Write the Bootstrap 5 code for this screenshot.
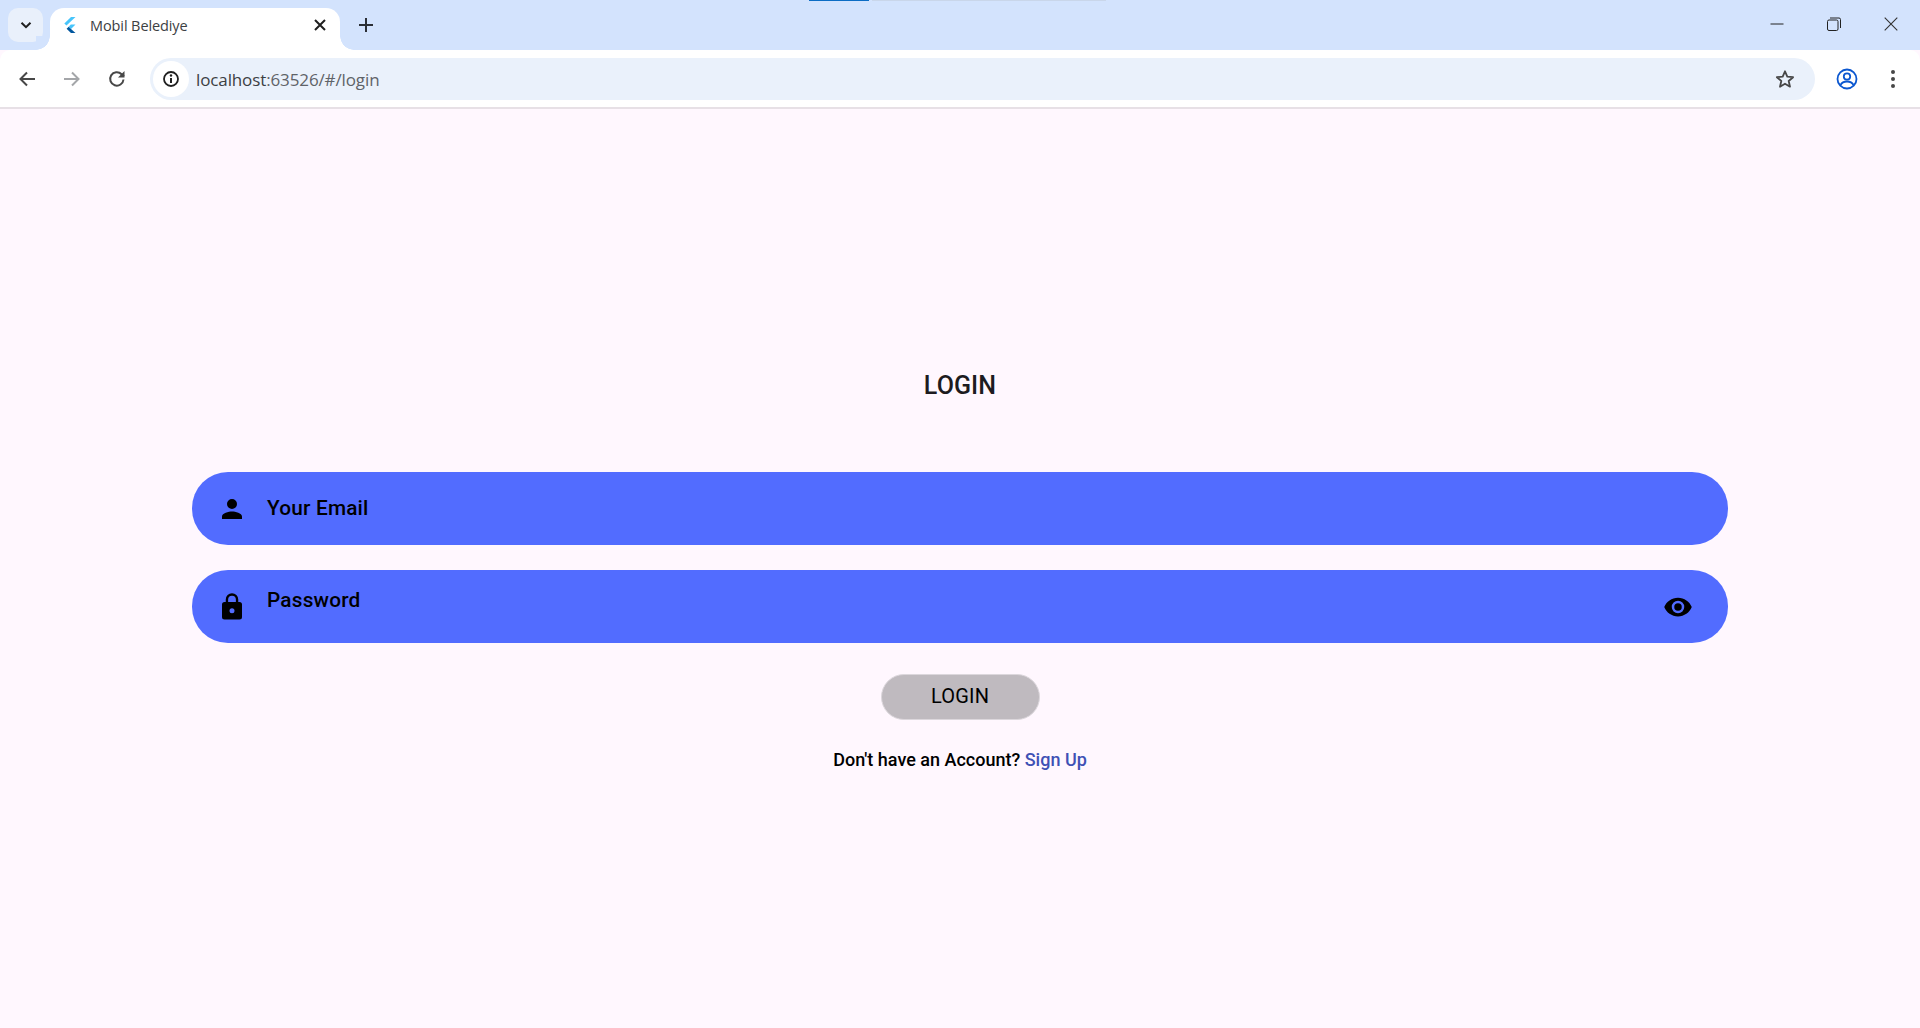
<!DOCTYPE html>
<html lang="en">
<head>
<meta charset="utf-8">
<title>Mobil Belediye</title>
<link href="https://cdn.jsdelivr.net/npm/bootstrap@5.3.0/dist/css/bootstrap.min.css" rel="stylesheet">
<style>
html,body{height:100%;margin:0}
body{background:#fff7fe;font-family:Roboto,"Liberation Sans",sans-serif;overflow:hidden;color:#000}
.chrome-strip{height:50px;background:#d3e3fd;position:relative}
.load-a{position:absolute;top:0;left:809px;width:60px;height:1px;background:#0b6cc4}
.load-b{position:absolute;top:0;left:872px;width:234px;height:1px;background:#c9d6ea}
.tab-search{width:35px;height:34px;margin:8px 0 0 8px;background:#e9f0fb;border-radius:10px}
.tab-shape{position:relative;width:290px;height:42px;margin:8px 0 0 7px;padding:0 0 8px 12px;background:#fff;border-radius:14px 14px 0 0;font:400 14.500px "Open Sans","Liberation Sans",sans-serif;color:#3c4043}
.tab-shape::before,.tab-shape::after{content:"";position:absolute;bottom:0;width:14px;height:14px;background:radial-gradient(circle at 100% 0,#d3e3fd 13.500px,#fff 14px)}
.tab-shape::before{left:-14px;transform:scaleX(-1)}
.tab-shape::after{right:-14px}
.tab-title{margin-left:12px;width:207px;letter-spacing:-.1px}
.plus-wrap{margin-left:19px}
.win-btns{margin-left:auto;width:150px;padding:0 22px 2px 0}
.tool-row{height:59px;padding-top:1px;background:#fff;border-bottom:2px solid #e7e0e6;border-radius:10px 10px 0 0}
.nav-ico{width:45px}
.url-pill{height:42px;margin-left:11px;width:1665px;flex:none;background:#eaf1fb;border-radius:21px;padding-left:3px;color:#3c4043;font:400 17px "Open Sans","Liberation Sans",sans-serif;letter-spacing:-.12px}
.url-dim{color:#5f6368}
.info-wrap{width:36px;height:36px;border-radius:50%;background:#fff;margin-right:7px}
.star-wrap{margin-left:auto;padding-right:20px}
.profile-wrap{width:64px}
.menu-wrap{padding-right:14px}
.login-view{height:919px;padding-top:261px}
.page-title{font-size:25px;font-weight:500;line-height:32px;color:#1d1b20;margin:0 0 70px;letter-spacing:.1px}
.form-wrap{width:1536px;margin:0 auto}
.pill-field{height:73px;background:#526cff;border-radius:36px;padding:0 35px 0 25px;margin-bottom:25px;font-size:20.800px;font-weight:500;color:#000}
.pill-field .lab{margin-left:20px;letter-spacing:.2px;padding-top:1px}
.lab-up{position:relative;top:-6px}
.eye{margin-left:auto}
.login-btn{display:block;width:159px;height:46px;margin:31px auto 0;padding:0 0 2px;border:1px solid #dcd7dc;border-radius:23px;background:#bfbabf;color:#000;font:400 20px Roboto,sans-serif;letter-spacing:.2px;box-shadow:none}
.login-btn:hover{background:#bfbabf;color:#000;border-color:#dcd7dc}
.signup-line{margin:28px 0 0;font-size:18px;font-weight:500;line-height:24px;color:#000}
.signup-line a{color:#3f51b5;text-decoration:none}
</style>
</head>
<body>
<div class="chrome-strip d-flex">
  <span class="load-a"></span><span class="load-b"></span>
  <div class="tab-search d-flex align-items-center justify-content-center">
    <svg width="14" height="14" viewBox="0 0 14 14"><path d="M2.500 4.700 7 9.200l4.500-4.500" fill="none" stroke="#1f1f1f" stroke-width="2"/></svg>
  </div>
  <div class="tab-shape d-flex align-items-center">
    <svg width="16" height="18" viewBox="0 0 16 18" class="flex-shrink-0"><path d="M9 1h4.500L4.500 9.500 2.300 7.500z" fill="#47c5fb"/><path d="M8.800 8.500h4.700L9 13l-2.300-2.300z" fill="#47c5fb"/><path d="M6.700 10.700 9 13l4.500 4H9L4.600 12.800z" fill="#00569e"/></svg>
    <span class="tab-title">Mobil Belediye</span>
    <svg width="14" height="14" viewBox="0 0 14 14" class="ms-3"><path d="M2 2l10 10M12 2 2 12" stroke="#1f1f1f" stroke-width="2" fill="none"/></svg>
  </div>
  <div class="plus-wrap d-flex align-items-center">
    <svg width="14" height="14" viewBox="0 0 14 14"><path d="M7 0v14M0 7h14" stroke="#2b2f36" stroke-width="2"/></svg>
  </div>
  <div class="win-btns d-flex align-items-center justify-content-between">
    <svg width="14" height="14" viewBox="0 0 14 14"><path d="M.5 7h13" stroke="#222" stroke-width="1"/></svg>
    <svg width="14" height="14" viewBox="0 0 14 14" fill="none" stroke="#222"><rect x=".5" y="3" width="10.500" height="10.500" rx="1.500"/><path d="M3 1h9a1.500 1.500 0 0 1 1.500 1.500V11"/></svg>
    <svg width="14" height="14" viewBox="0 0 14 14"><path d="M.7.700l12.600 12.600M13.300.700.7 13.300" stroke="#333" stroke-width="1.100" fill="none"/></svg>
  </div>
</div>
<div class="tool-row d-flex align-items-center ps-1">
  <div class="nav-ico d-flex justify-content-center">
    <svg width="18" height="18" viewBox="0 0 18 18"><path d="M17 9H2.500M9 2.500 2.500 9 9 15.500" fill="none" stroke="#474747" stroke-width="2"/></svg>
  </div>
  <div class="nav-ico d-flex justify-content-center">
    <svg width="18" height="18" viewBox="0 0 18 18"><path d="M1 9h14.500M9 2.500 15.500 9 9 15.500" fill="none" stroke="#a4a6a9" stroke-width="2"/></svg>
  </div>
  <div class="nav-ico d-flex justify-content-center">
    <svg width="18" height="18" viewBox="0 0 18 18"><path d="M15.500 9.500A6.700 6.700 0 1 1 13.600 4.200L16 6.200" fill="none" stroke="#474747" stroke-width="2"/><path d="M16.500 1v6.500H10z" fill="#474747"/></svg>
  </div>
  <div class="url-pill d-flex align-items-center">
    <span class="info-wrap d-flex align-items-center justify-content-center">
      <svg width="18" height="18" viewBox="0 0 18 18"><circle cx="9" cy="9" r="7" fill="none" stroke="#1f1f1f" stroke-width="1.800"/><path d="M9 8v5" stroke="#1f1f1f" stroke-width="2"/><circle cx="9" cy="5.500" r="1.200" fill="#1f1f1f"/></svg>
    </span>
    <span>localhost<span class="url-dim">:63526/#/login</span></span>
    <span class="star-wrap d-flex">
      <svg width="20" height="20" viewBox="0 0 20 20"><path d="M10 2.300 12.300 7.700l5.800.5-4.400 3.800 1.300 5.700L10 14.700l-5 3 1.300-5.700L1.900 8.200l5.800-.5z" fill="none" stroke="#474747" stroke-width="1.800" stroke-linejoin="round"/></svg>
    </span>
  </div>
  <div class="profile-wrap d-flex justify-content-center">
    <svg width="22" height="22" viewBox="0 0 22 22"><circle cx="11" cy="11" r="9.500" fill="none" stroke="#0b57d0" stroke-width="1.800"/><circle cx="11" cy="8.500" r="3.200" fill="none" stroke="#0b57d0" stroke-width="1.800"/><path d="M4.500 17c1.500-3 4-3.500 6.500-3.500s5 .5 6.500 3.500" fill="none" stroke="#0b57d0" stroke-width="1.800"/></svg>
  </div>
  <div class="menu-wrap d-flex justify-content-center flex-fill">
    <svg width="6" height="20" viewBox="0 0 6 20" fill="#474747"><circle cx="3" cy="3" r="2"/><circle cx="3" cy="10" r="2"/><circle cx="3" cy="17" r="2"/></svg>
  </div>
</div>
<main class="login-view text-center">
  <h1 class="page-title">LOGIN</h1>
  <div class="form-wrap">
    <div class="pill-field d-flex align-items-center">
      <svg width="30" height="30" viewBox="0 0 24 24"><path d="M12 12a4 4 0 1 0 0-8 4 4 0 0 0 0 8zm0 2c-2.700 0-8 1.300-8 4v2h16v-2c0-2.700-5.300-4-8-4z"/></svg>
      <span class="lab">Your Email</span>
    </div>
    <div class="pill-field d-flex align-items-center">
      <svg width="30" height="30" viewBox="0 0 24 24"><path fill-rule="evenodd" d="M18 8h-1V6a5 5 0 0 0-10 0v2H6a2 2 0 0 0-2 2v10a2 2 0 0 0 2 2h12a2 2 0 0 0 2-2V10a2 2 0 0 0-2-2zm-6 9a2 2 0 1 1 0-4 2 2 0 0 1 0 4zm3.100-9H8.900V6a3.100 3.100 0 0 1 6.200 0z"/></svg>
      <span class="lab lab-up">Password</span>
      <svg class="eye" width="30" height="30" viewBox="0 0 24 24"><path fill-rule="evenodd" d="M12 4.500C7 4.500 2.700 7.600 1 12c1.700 4.400 6 7.500 11 7.500s9.300-3.100 11-7.500c-1.700-4.400-6-7.500-11-7.500zM12 17a5 5 0 1 1 0-10 5 5 0 0 1 0 10zm0-8a3 3 0 1 0 0 6 3 3 0 0 0 0-6z"/></svg>
    </div>
  </div>
  <button type="button" class="btn login-btn">LOGIN</button>
  <p class="signup-line">Don't have an Account? <a href="#">Sign Up</a></p>
</main>
<script src="https://cdn.jsdelivr.net/npm/bootstrap@5.3.0/dist/js/bootstrap.bundle.min.js"></script>
</body>
</html>
